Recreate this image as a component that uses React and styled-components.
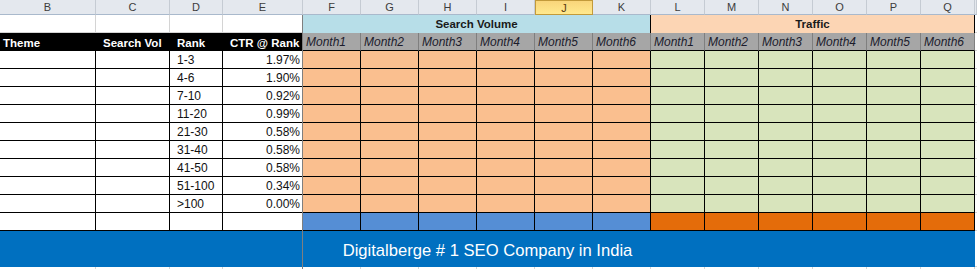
import styled, { createGlobalStyle, css } from 'styled-components';

const GlobalStyle = createGlobalStyle`
  html, body {
    margin: 0;
    padding: 0;
    background: #ffffff;
    overflow: hidden;
  }
  body {
    font-family: 'Liberation Sans', Arial, sans-serif;
  }
`;

const letters = ['B', 'C', 'D', 'E', 'F', 'G', 'H', 'I', 'J', 'K', 'L', 'M', 'N', 'O', 'P', 'Q'];
const months = ['Month1', 'Month2', 'Month3', 'Month4', 'Month5', 'Month6'];
const ranks = [
  ['1-3', '1.97%'],
  ['4-6', '1.90%'],
  ['7-10', '0.92%'],
  ['11-20', '0.99%'],
  ['21-30', '0.58%'],
  ['31-40', '0.58%'],
  ['41-50', '0.58%'],
  ['51-100', '0.34%'],
  ['>100', '0.00%'],
];

const COLS = '96px 74px 53px 80px repeat(6, 58px) repeat(6, 54px) 1fr';

const Sheet = styled.div`
  position: relative;
  width: 977px;
  height: 269px;
  overflow: hidden;
`;

const Row = styled.div`
  display: grid;
  grid-template-columns: ${COLS};
  height: ${(p) => p.h || 18}px;
`;

// column letters
const ColHead = styled.div`
  box-sizing: border-box;
  display: flex;
  align-items: center;
  justify-content: center;
  font-size: 11px;
  color: #3c3c3c;
  background: #e4e8ee;
  border-right: 1px solid #c5cbd3;
  border-bottom: 1px solid #a9b9cc;
  ${(p) =>
    p.active &&
    css`
      background: linear-gradient(#f9d57a, #ffe98e);
      border: 1px solid #c29a3a;
      color: #5a3a10;
    `}
`;

const Cell = styled.div`
  box-sizing: border-box;
  display: flex;
  align-items: center;
  padding: 1px 2px 0 ${(p) => p.indent || 3}px;
  font-size: 12px;
  color: #111;
  white-space: nowrap;
  overflow: hidden;
  background: ${(p) => p.bg || '#ffffff'};
  border-right: 1px solid ${(p) => p.line || '#d4d4d4'};
  border-bottom: 1px solid ${(p) => p.line || '#d4d4d4'};
  justify-content: ${(p) => (p.right ? 'flex-end' : 'flex-start')};
`;

const Merged = styled.div`
  box-sizing: border-box;
  grid-column: span 6;
  display: flex;
  align-items: center;
  justify-content: center;
  font-size: 11.5px;
  font-weight: bold;
  color: #1a1a1a;
  background: ${(p) => p.bg};
  border-right: 1px solid ${(p) => p.rightLine || '#d4d4d4'};
`;

const HeadCell = styled.div`
  box-sizing: border-box;
  display: flex;
  align-items: center;
  padding: 1px 2px 0 ${(p) => p.indent || 3}px;
  background: #000000;
  color: #ffffff;
  font-size: 11.5px;
  font-weight: bold;
  white-space: nowrap;
`;

const MonthCell = styled.div`
  box-sizing: border-box;
  display: flex;
  align-items: center;
  padding: 1px 3px 0;
  background: #a6a6a6;
  color: #1c1c2c;
  font-size: 12px;
  font-style: italic;
  border-right: 1px solid #7f7f7f;
  border-bottom: 1px solid #000;
`;

const Banner = styled.div`
  grid-column: 1 / 17;
  display: flex;
  align-items: center;
  justify-content: center;
  background: #0070c0;
  color: #ffffff;
  font-size: 16.6px;
  padding-top: 3px;
`;

const FreezeLine = styled.div`
  position: absolute;
  left: 302px;
  top: 15px;
  bottom: 0;
  width: 1px;
  background: #7f7f7f;
`;

const App = () => {
  return (
    <>
      <GlobalStyle />
      <Sheet>
        <Row h={15}>
          {letters.map((l) => (
            <ColHead key={l} active={l === 'J'}>
              {l}
            </ColHead>
          ))}
          <ColHead />
        </Row>

        <Row>
          <Cell />
          <Cell />
          <Cell />
          <Cell line='#d4d4d4' style={{ borderRightColor: '#000' }} />
          <Merged bg='#b7dee8' rightLine='#000'>Search Volume</Merged>
          <Merged bg='#fcd5b4' rightLine='#000'>Traffic</Merged>
          <Cell />
        </Row>

        <Row>
          <HeadCell>Theme</HeadCell>
          <HeadCell indent={7}>Search Vol</HeadCell>
          <HeadCell indent={7}>Rank</HeadCell>
          <HeadCell indent={7}>CTR @ Rank</HeadCell>
          {months.map((m) => (
            <MonthCell key={'sv' + m}>{m}</MonthCell>
          ))}
          {months.map((m) => (
            <MonthCell key={'tr' + m}>{m}</MonthCell>
          ))}
          <Cell />
        </Row>

        {ranks.map(([rank, ctr]) => (
          <Row key={rank}>
            <Cell line='#000' />
            <Cell line='#000' />
            <Cell line='#000' indent={7}>
              {rank}
            </Cell>
            <Cell line='#000' right>
              {ctr}
            </Cell>
            {months.map((m) => (
              <Cell key={'sv' + m} line='#000' bg='#fabf8f' />
            ))}
            {months.map((m) => (
              <Cell key={'tr' + m} line='#000' bg='#d8e4bc' />
            ))}
            <Cell />
          </Row>
        ))}

        <Row>
          <Cell line='#000' />
          <Cell line='#000' />
          <Cell line='#000' />
          <Cell line='#000' />
          {months.map((m) => (
            <Cell key={'sv' + m} line='#000' bg='#558ed5' />
          ))}
          {months.map((m) => (
            <Cell key={'tr' + m} line='#000' bg='#e46c0a' />
          ))}
          <Cell />
        </Row>

        <Row h={36}>
          <Banner>Digitalberge # 1 SEO Company in India</Banner>
          <Cell />
        </Row>
        <Row h={4}>
          {letters.map((l) => (
            <Cell key={l} style={{ borderBottom: 'none' }} />
          ))}
        </Row>

        <FreezeLine />
      </Sheet>
    </>
  );
};

export default App;
